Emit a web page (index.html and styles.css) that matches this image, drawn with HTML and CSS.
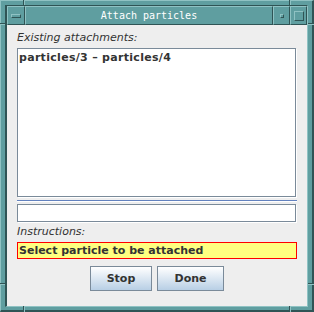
FILE: index.html
```html
<!DOCTYPE html>
<html lang="en">
<head>
    <meta charset="UTF-8">
    <title>Attach particles</title>
    <link rel="stylesheet" href="styles.css">
</head>
<body>
    <div class="window">
        <!-- resize handle notches of the frame -->
        <span class="notch notch-top-l"></span>
        <span class="notch notch-top-r"></span>
        <span class="notch notch-left-t"></span>
        <span class="notch notch-right-t"></span>
        <span class="notch notch-left-b"></span>
        <span class="notch notch-right-b"></span>
        <span class="notch notch-bot-l"></span>
        <span class="notch notch-bot-r"></span>

        <div class="inner">
            <div class="titlebar">
                <div class="tb-btn menu-btn"><span class="bar"></span></div>
                <div class="title">Attach particles</div>
                <div class="tb-btn min-btn"><span class="dot"></span></div>
                <div class="tb-btn max-btn"><span class="box"></span></div>
            </div>
            <div class="content">
                <div class="label">Existing attachments:</div>
                <div class="list">
                    <div class="list-item">particles/3 &ndash; particles/4</div>
                </div>
                <div class="separator"></div>
                <div class="field"></div>
                <div class="label label-instr">Instructions:</div>
                <div class="instructions">Select particle to be attached</div>
                <div class="buttons">
                    <button class="btn btn-stop">Stop</button>
                    <button class="btn btn-done">Done</button>
                </div>
            </div>
        </div>
    </div>
</body>
</html>
```

FILE: styles.css
```css
* { margin: 0; padding: 0; box-sizing: border-box; }
body { width: 314px; height: 312px; background: #5f9ea0; overflow: hidden; }

/* window manager frame */
.window { position: relative; width: 314px; height: 312px; background: #5f9ea0; border-top: 1px solid #8fc2c3; border-left: 1px solid #8fc2c3; border-right: 2px solid #2f5455; border-bottom: 2px solid #2f5455; padding: 4px 4px 3px 4px; }
.inner { height: 100%; display: flex; flex-direction: column; border-top: 1px solid #2f5455; border-left: 2px solid #2f5455; border-right: 1px solid #8fc2c3; border-bottom: 1px solid #8fc2c3; }

.notch { position: absolute; }
.notch-top-l { left: 22px; top: -1px; width: 2px; height: 5px; border-left: 1px solid #2f5455; border-right: 1px solid #8fc2c3; }
.notch-top-r { left: 288px; top: -1px; width: 2px; height: 5px; border-left: 1px solid #2f5455; border-right: 1px solid #8fc2c3; }
.notch-bot-l { left: 22px; bottom: -2px; width: 2px; height: 6px; border-left: 1px solid #2f5455; border-right: 1px solid #8fc2c3; }
.notch-bot-r { left: 288px; bottom: -2px; width: 2px; height: 6px; border-left: 1px solid #2f5455; border-right: 1px solid #8fc2c3; }
.notch-left-t { left: -1px; top: 22px; width: 5px; height: 2px; border-top: 1px solid #2f5455; border-bottom: 1px solid #8fc2c3; }
.notch-right-t { right: -2px; top: 22px; width: 6px; height: 2px; border-top: 1px solid #2f5455; border-bottom: 1px solid #8fc2c3; }
.notch-left-b { left: -1px; top: 282px; width: 5px; height: 2px; border-top: 1px solid #2f5455; border-bottom: 1px solid #8fc2c3; }
.notch-right-b { right: -2px; top: 282px; width: 6px; height: 2px; border-top: 1px solid #2f5455; border-bottom: 1px solid #8fc2c3; }

.titlebar { display: flex; height: 19px; flex-shrink: 0; }
.tb-btn { width: 17px; height: 19px; display: flex; align-items: center; justify-content: center; border-top: 1px solid #8fc2c3; border-left: 1px solid #8fc2c3; border-right: 1px solid #2f5455; border-bottom: 1px solid #2f5455; }
.menu-btn { width: 18px; }
.title { flex: 1; height: 19px; color: #ffffff; font-family: "DejaVu Sans Mono", monospace; font-size: 10px; line-height: 17px; text-align: center; border-top: 1px solid #8fc2c3; border-left: 1px solid #8fc2c3; border-right: 1px solid #2f5455; border-bottom: 1px solid #2f5455; }
.menu-btn .bar { width: 10px; height: 4px; border-top: 1px solid #8fc2c3; border-left: 1px solid #8fc2c3; border-right: 1px solid #2f5455; border-bottom: 1px solid #2f5455; }
.min-btn .dot { width: 4px; height: 4px; border-top: 1px solid #8fc2c3; border-left: 1px solid #8fc2c3; border-right: 1px solid #2f5455; border-bottom: 1px solid #2f5455; }
.max-btn .box { width: 10px; height: 10px; border-top: 1px solid #8fc2c3; border-left: 1px solid #8fc2c3; border-right: 1px solid #2f5455; border-bottom: 1px solid #2f5455; }

/* dialog body */
.content { flex: 1; background: #eeeeee; padding: 4px 10px 0 10px; display: flex; flex-direction: column; font-family: "DejaVu Sans", sans-serif; font-size: 11px; color: #333333; }
.label { font-style: italic; height: 19px; line-height: 18px; }
.label-instr { height: 20px; line-height: 20px; }
.list { height: 149px; width: 279px; flex-shrink: 0; background: #ffffff; border: 1px solid #7a8a99; box-shadow: 1px 1px 0 #ffffff; padding: 2px 1px; }
.list-item { font-weight: bold; line-height: 14px; letter-spacing: 0.3px; }
.separator { height: 2px; width: 280px; margin: 3px 0 2px; border-top: 1px solid #6382bf; border-bottom: 1px solid #ffffff; }
.field { height: 18px; width: 279px; background: #ffffff; border: 1px solid #7a8a99; box-shadow: 1px 1px 0 #ffffff; }
.instructions { height: 17px; width: 280px; background: #ffff80; border: 1px solid #ff0000; font-weight: bold; line-height: 15px; padding-left: 1px; }
.buttons { display: flex; justify-content: center; gap: 5px; margin-top: 7px; }
.btn { height: 25px; background: linear-gradient(#ffffff, #b8cfe5); border: 1px solid #7a8a99; font-family: "DejaVu Sans", sans-serif; font-size: 11px; font-weight: bold; color: #333333; }
.btn-stop { width: 62px; }
.btn-done { width: 67px; }
```
